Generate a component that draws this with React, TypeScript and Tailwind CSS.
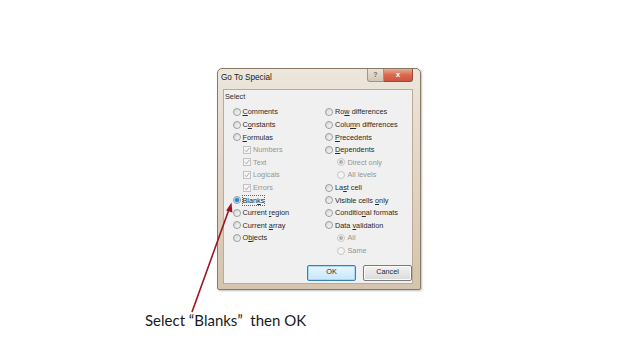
import React from 'react';

type Kind = 'radio' | 'check';

interface Opt {
  label: React.ReactNode;
  kind: Kind;
  indent?: 'none' | 'sub';
  checked?: boolean;
  disabled?: boolean;
  focus?: boolean;
}

function u(s: string, i: number) {
  return (
    <>
      {s.slice(0, i)}
      <span className="underline underline-offset-[1px]">{s[i]}</span>
      {s.slice(i + 1)}
    </>
  );
}

const leftCol: Opt[] = [
  { label: u('Comments', 0), kind: 'radio' },
  { label: u('Constants', 1), kind: 'radio' },
  { label: u('Formulas', 0), kind: 'radio' },
  { label: 'Numbers', kind: 'check', indent: 'sub', checked: true, disabled: true },
  { label: 'Text', kind: 'check', indent: 'sub', checked: true, disabled: true },
  { label: 'Logicals', kind: 'check', indent: 'sub', checked: true, disabled: true },
  { label: 'Errors', kind: 'check', indent: 'sub', checked: true, disabled: true },
  { label: u('Blanks', 4), kind: 'radio', checked: true, focus: true },
  { label: u('Current region', 8), kind: 'radio' },
  { label: u('Current array', 8), kind: 'radio' },
  { label: u('Objects', 1), kind: 'radio' },
];

const rightCol: Opt[] = [
  { label: u('Row differences', 2), kind: 'radio' },
  { label: u('Column differences', 4), kind: 'radio' },
  { label: u('Precedents', 0), kind: 'radio' },
  { label: u('Dependents', 0), kind: 'radio' },
  { label: 'Direct only', kind: 'radio', indent: 'sub', checked: true, disabled: true },
  { label: 'All levels', kind: 'radio', indent: 'sub', disabled: true },
  { label: u('Last cell', 2), kind: 'radio' },
  { label: u('Visible cells only', 14), kind: 'radio' },
  { label: u('Conditional formats', 8), kind: 'radio' },
  { label: u('Data validation', 5), kind: 'radio' },
  { label: 'All', kind: 'radio', indent: 'sub', checked: true, disabled: true },
  { label: 'Same', kind: 'radio', indent: 'sub', disabled: true },
];

function Radio({ checked, disabled }: { checked?: boolean; disabled?: boolean }) {
  return (
    <span
      className={`flex items-center justify-center w-[8px] h-[8px] rounded-full border shrink-0 ${
        disabled
          ? 'border-[#c8c8c8] bg-[#f4f4f4]'
          : 'border-[#9a9da0] bg-gradient-to-br from-[#d2d4d6] to-[#fbfbfb]'
      }`}
    >
      {checked && (
        <span
          className={`w-[4px] h-[4px] rounded-full ${
            disabled ? 'bg-[#b0b0b0]' : 'bg-[#2f82c2] shadow-[0_0_0_1px_#9ccbec]'
          }`}
        />
      )}
    </span>
  );
}

function Check({ checked, disabled }: { checked?: boolean; disabled?: boolean }) {
  return (
    <span
      className={`flex items-center justify-center w-[8px] h-[8px] border shrink-0 ${
        disabled ? 'border-[#c2c2c2] bg-[#f5f5f5]' : 'border-[#8c8f92] bg-white'
      }`}
    >
      {checked && (
        <svg width="6" height="6" viewBox="0 0 6 6">
          <path d="M0.8 3.1 L2.4 4.7 L5.3 1" fill="none" stroke="#a0a0a0" strokeWidth="0.9" />
        </svg>
      )}
    </span>
  );
}

function Item({ opt, side }: { opt: Opt; side: 'l' | 'r' }) {
  const sub = opt.indent === 'sub';
  const pad = side === 'l' ? (sub ? 'pl-[11px]' : 'pl-[0.5px]') : sub ? 'pl-[13px]' : 'pl-[0.5px]';
  const gap = side === 'l' ? 'gap-[2px]' : 'gap-[2.5px]';
  return (
    <div className={`flex items-center h-[12.6px] ${pad} ${gap}`}>
      {opt.kind === 'radio' ? (
        <Radio checked={opt.checked} disabled={opt.disabled} />
      ) : (
        <Check checked={opt.checked} disabled={opt.disabled} />
      )}
      <span
        className={`whitespace-nowrap leading-[9px] ${opt.disabled ? 'text-[#959595]' : 'text-[#2a2a2a]'} ${
          opt.focus ? 'outline outline-1 outline-dotted outline-[#666]' : ''
        }`}
      >
        {opt.label}
      </span>
    </div>
  );
}

function Arrow() {
  return (
    <svg
      className="absolute left-0 top-0 pointer-events-none"
      width="640"
      height="360"
      viewBox="0 0 640 360"
    >
      <line x1="192" y1="312" x2="229.5" y2="208" stroke="#9b1622" strokeWidth="1.6" />
      <path d="M231.5 202.5 L226.2 210.6 L232.4 212.4 Z" fill="#9b1622" />
    </svg>
  );
}

export default function App() {
  return (
    <div className="relative w-[640px] h-[360px] bg-white overflow-hidden font-['Liberation_Sans',Arial,sans-serif]">
      <div className="pl-[217px] pt-[68px]">
        {/* dialog window */}
        <div className="flex flex-col w-[204px] h-[222px] border border-[#8a7964] rounded-t-[5px] rounded-b-[2px] bg-gradient-to-b from-[#ece6dc] via-[#e0d4c3] to-[#d5c4ad] shadow-[1px_1px_2px_rgba(0,0,0,0.25)]">
          <div className="flex h-[20px] shrink-0">
            <span className="pl-[3px] pt-[4px] text-[8.2px] leading-[10px] text-[#222]">Go To Special</span>
            <div className="ml-auto mr-[7px] flex h-[13px]">
              <div className="flex items-center justify-center w-[17px] h-full border border-[#a09484] border-t-0 rounded-bl-[3px] bg-gradient-to-b from-[#e9e2d7] to-[#d2c7b7] text-[7px] font-bold text-[#786e60]">
                ?
              </div>
              <div className="flex items-center justify-center w-[29px] h-full border border-[#9a4a3e] border-t-0 border-l-0 rounded-br-[3px] bg-gradient-to-b from-[#e8ab95] via-[#d8694f] to-[#cc563d] text-[8px] font-bold text-white">
                x
              </div>
            </div>
          </div>

          {/* client area */}
          <div className="flex flex-col h-[195px] ml-[5px] mr-[7px] border border-[#b9ab98] bg-[#f0f0f0] text-[7.3px]">
            <div className="pl-[1px] h-[14px] leading-[14px] text-[#2a2a2a]">Select</div>
            <div className="mt-[1.7px] ml-[8px] flex">
              <div className="w-[92px] flex flex-col">
                {leftCol.map((o, i) => (
                  <Item key={i} opt={o} side="l" />
                ))}
              </div>
              <div className="flex flex-col">
                {rightCol.map((o, i) => (
                  <Item key={i} opt={o} side="r" />
                ))}
              </div>
            </div>
            <div className="mt-[8px] flex justify-end gap-[7px]">
              <button className="w-[49px] h-[16px] rounded-[2px] border border-[#3c7fb1] bg-gradient-to-b from-[#eaf6fd] to-[#c4e7fb] shadow-[inset_0_0_0_1px_#a6d8f5] text-[7.3px] text-[#2a2a2a]">
                OK
              </button>
              <button className="w-[49px] h-[16px] rounded-[2px] border border-[#7a7a7a] bg-gradient-to-b from-[#f3f3f3] to-[#dadada] shadow-[inset_0_0_0_1px_#fbfbfb] text-[7.3px] text-[#2a2a2a]">
                Cancel
              </button>
            </div>
          </div>
        </div>
      </div>

      <p className="mt-[20px] pl-[145px] whitespace-pre font-['Lato','Open_Sans',sans-serif] text-[15px] leading-[20px] text-[#1a1a1a]">
        Select “Blanks”  then OK
      </p>

      <Arrow />
    </div>
  );
}
